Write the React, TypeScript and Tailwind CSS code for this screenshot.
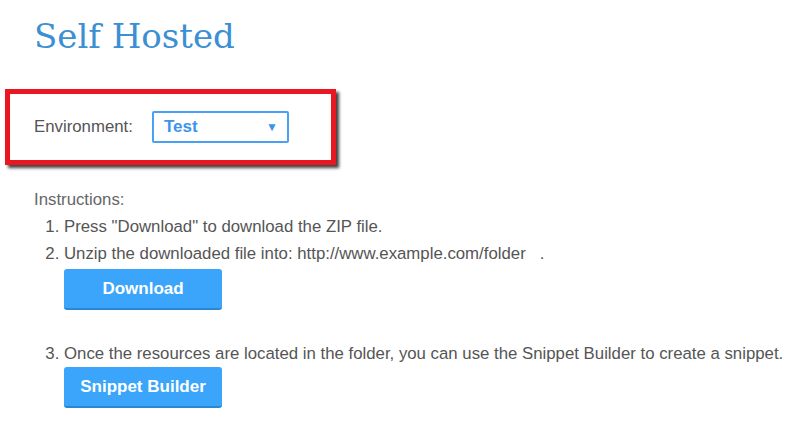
import React from "react";

export default function App() {
  return (
    <div className="w-[812px] h-[436px] bg-white overflow-hidden relative" style={{ fontFamily: '"Liberation Sans", Arial, sans-serif' }}>
      <div className="pl-[34px] pt-[14px] h-[58px]">
        <h1 className="text-[34px] leading-[44px] text-[#3b8fd2]" style={{ fontFamily: '"DejaVu Serif", serif' }}>Self Hosted</h1>
      </div>
      <div className="ml-[5px] mt-[31px] w-[331px] h-[76px] border-[5px] border-[#ea1622] shadow-[3px_3px_3px_rgba(0,0,0,0.75)] flex items-center pl-[24px]">
        <span className="text-[16.8px] text-[#555] mr-[19px]">Environment:</span>
        <div className="w-[137px] h-[32px] border-2 border-[#4aa0f2] rounded-[2px] flex items-center justify-between pl-[10px] pr-[9px]">
          <span className="text-[17px] font-semibold text-[#3d94ea]">Test</span>
          <span className="text-[12px] text-[#3d94ea]">▼</span>
        </div>
      </div>
      <div className="pl-[34px] mt-[21px] text-[16.8px] text-[#555] leading-[27px]">
        <div className="text-[#666]">Instructions:</div>
        <ol className="pl-[30px] list-decimal">
          <li>Press "Download" to download the ZIP file.</li>
          <li>
            Unzip the downloaded file into: http://www.example.com/folder<span className="ml-[14px]">.</span>
            <div className="flex mt-[2px] mb-[30px]">
              <button className="w-[158px] h-[41px] rounded-[3px] bg-[#3aa5fa] border-b-2 border-[#2a87d6] text-white font-bold text-[17px] leading-none">Download</button>
            </div>
          </li>
          <li>
            Once the resources are located in the folder, you can use the Snippet Builder to create a snippet.
            <div className="flex">
              <button className="w-[158px] h-[41px] rounded-[3px] bg-[#3aa5fa] border-b-2 border-[#2a87d6] text-white font-bold text-[17px] leading-none">Snippet Builder</button>
            </div>
          </li>
        </ol>
      </div>
    </div>
  );
}
